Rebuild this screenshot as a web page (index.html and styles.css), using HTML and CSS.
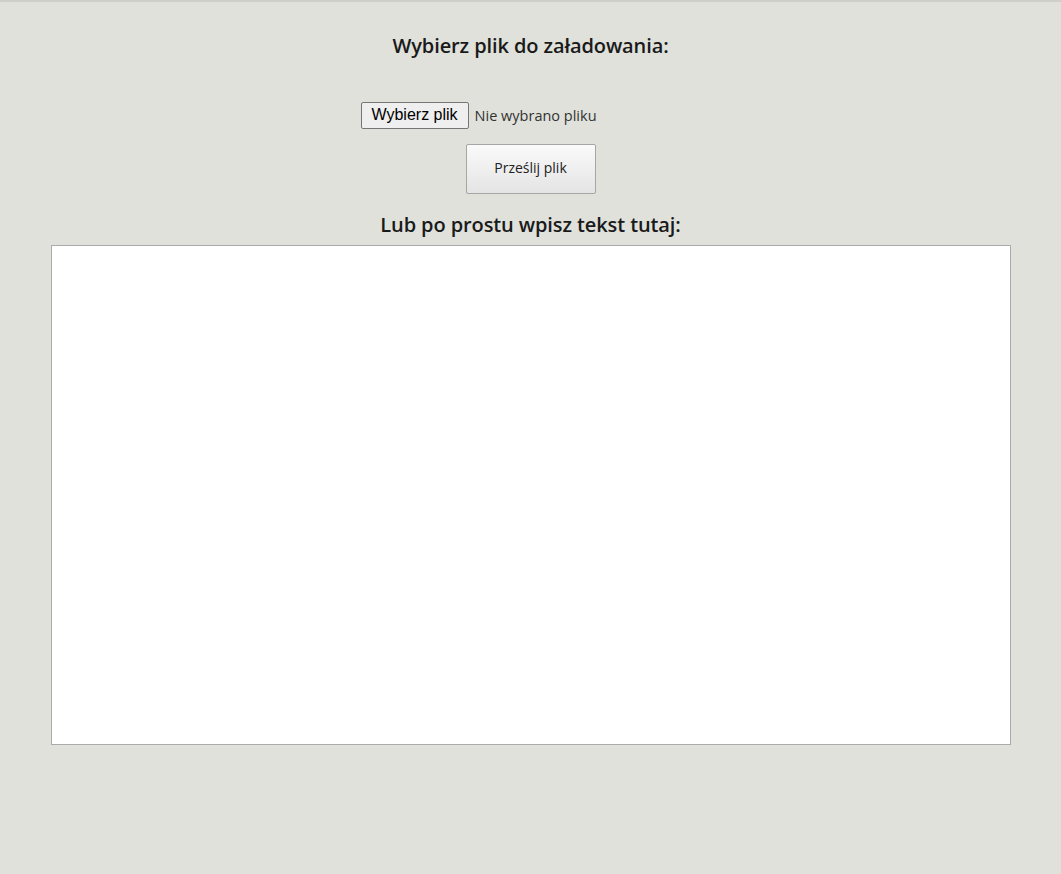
FILE: index.html
```html
<!DOCTYPE html>
<html lang="pl">
<head>
<meta charset="utf-8">
<title>Załaduj plik</title>
<link rel="stylesheet" href="styles.css">
</head>
<body>
<main class="page">
  <h2 class="title">Wybierz plik do załadowania:</h2>
  <form class="upload">
    <div class="file-row">
      <label class="file-btn">Wybierz plik</label>
      <span class="file-name">Nie wybrano pliku</span>
    </div>
    <button type="button" class="send-btn">Prześlij plik</button>
  </form>
  <h2 class="title title-2">Lub po prostu wpisz tekst tutaj:</h2>
  <textarea class="text-area"></textarea>
</main>
</body>
</html>
```
FILE: styles.css
```css
html, body {
  margin: 0;
  padding: 0;
  background: #dfe1da;
}
body {
  border-top: 2px solid #cdcfc8;
  font-family: "Open Sans", "Noto Sans", sans-serif;
  color: #1a1a1a;
}
.page {
  display: flex;
  flex-direction: column;
  align-items: center;
}
.title {
  margin: 30px 0 0 0;
  font-size: 20px;
  font-weight: 600;
  line-height: 28px;
  letter-spacing: -0.1px;
}
.upload {
  margin-top: 42px;
  display: flex;
  flex-direction: column;
  align-items: center;
}
.file-row {
  width: 340px;
  display: flex;
  align-items: center;
  gap: 6px;
}
.file-btn {
  font-family: "Liberation Sans", Arial, sans-serif;
  font-size: 16px;
  line-height: 18px;
  padding: 3px 10px 4px 10px;
  background: #efefef;
  border: 1px solid #767676;
  border-radius: 2px;
  color: #000;
}
.file-name {
  font-size: 14.5px;
  color: #333;
}
.send-btn {
  margin-top: 15px;
  width: 130px;
  height: 50px;
  padding: 0 0 3px 0;
  font-family: "Open Sans", "Noto Sans", sans-serif;
  font-size: 14px;
  color: #222;
  background: linear-gradient(#fafafa, #e4e4e4);
  border: 1px solid #a6a6a6;
  border-radius: 2px;
}
.title-2 {
  margin-top: 17px;
  margin-bottom: 6px;
}
.text-area {
  box-sizing: border-box;
  width: 960px;
  height: 500px;
  border: 1px solid #ababab;
  background: #fff;
  resize: none;
}
```
